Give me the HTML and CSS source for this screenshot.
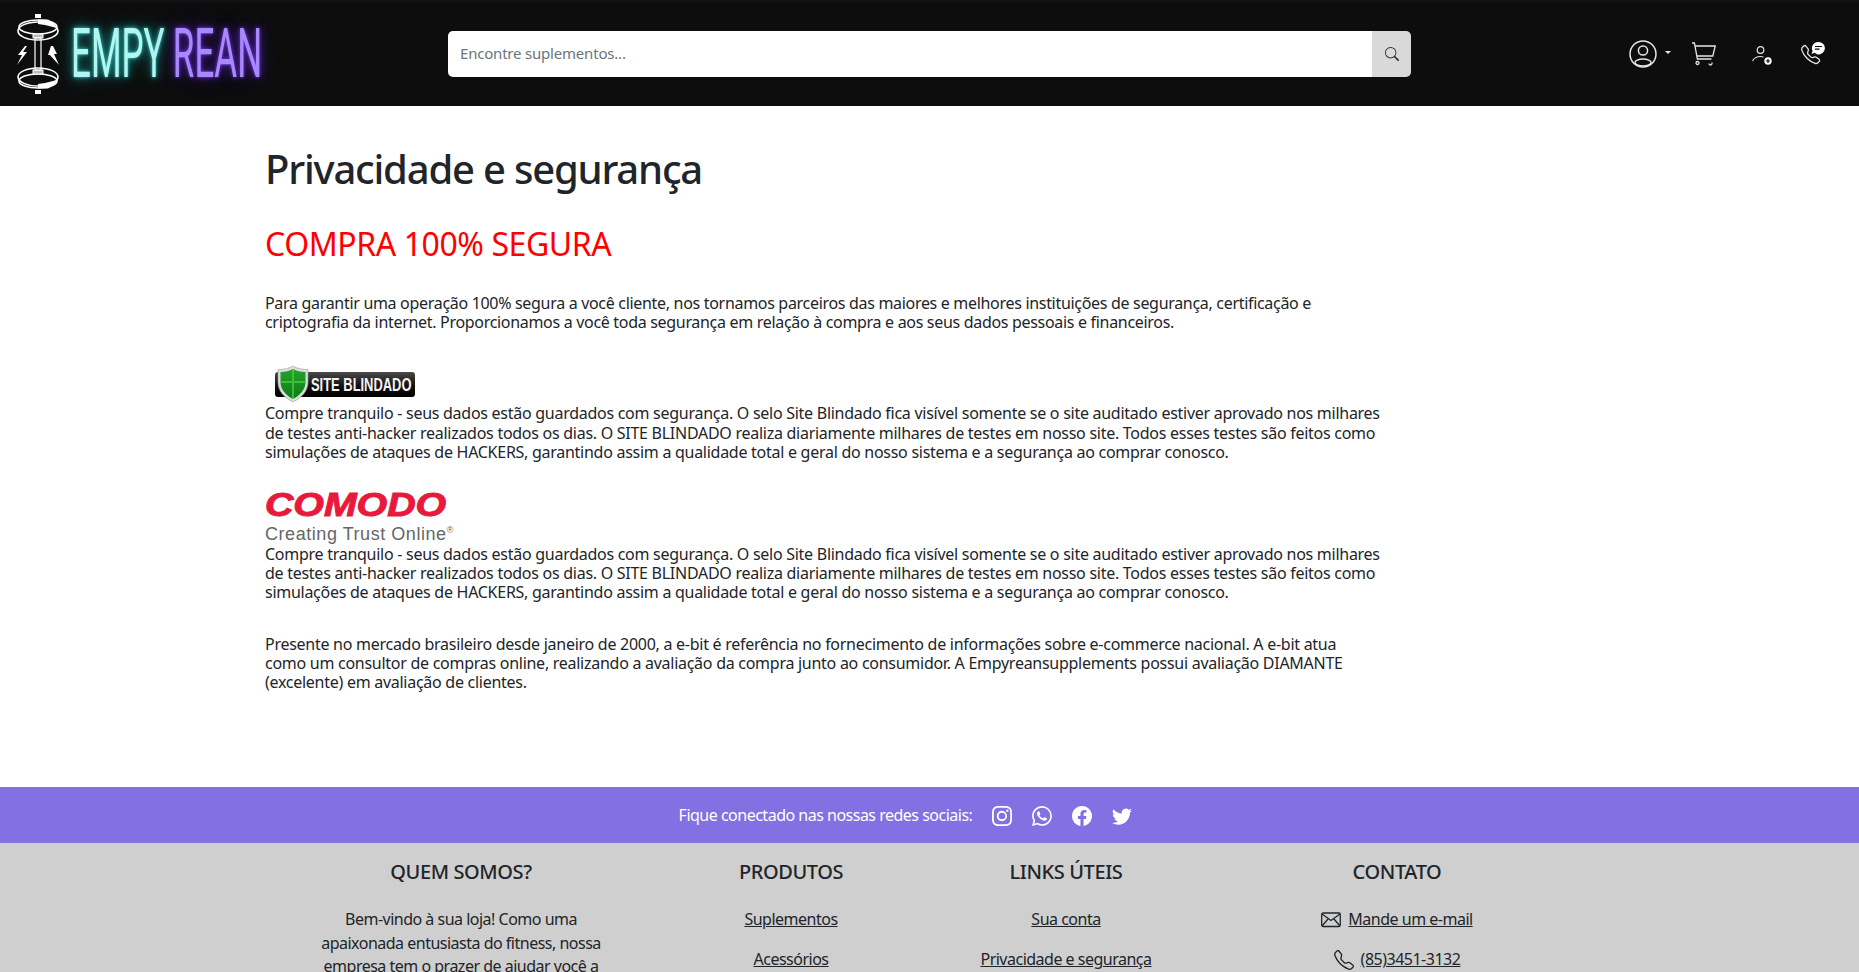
FILE: index.html
```html
<!DOCTYPE html>
<html lang="pt-BR">
<head>
    <meta charset="UTF-8">
    <meta name="viewport" content="width=device-width, initial-scale=1.0">
    <title>Privacidade e segurança</title>
    <link rel="stylesheet" href="styles.css">
</head>
<body>
<div class="page">

    <header class="topbar">
        <a class="logo" href="#">
            <svg class="logo-mark" viewBox="0 0 44 80" width="44" height="80" fill="none" stroke="#fff">
                <rect x="19" y="0" width="6" height="4" fill="#fff" stroke="none"/>
                <rect x="19" y="76" width="6" height="4" fill="#fff" stroke="none"/>
                <ellipse cx="22" cy="17" rx="20" ry="9" stroke-width="1.6"/>
                <ellipse cx="22" cy="13" rx="19" ry="7" stroke-width="1.6"/>
                <path d="M22 5.500h10l6 3.500 3 5-12-3-7-1z" fill="#fff" stroke="none"/>
                <ellipse cx="22" cy="63" rx="20" ry="9" stroke-width="1.6"/>
                <ellipse cx="22" cy="67" rx="19" ry="7" stroke-width="1.6"/>
                <path d="M22 74.500h10l6-3.500 3-5-12 3-7 1z" fill="#fff" stroke="none"/>
                <rect x="17" y="20" width="10" height="4" fill="#bbb" stroke="#fff"/>
                <rect x="17" y="56" width="10" height="4" fill="#bbb" stroke="#fff"/>
                <rect x="19" y="24" width="6" height="32" stroke-width="1.2"/>
                <path d="M9 32l-7 9h4l-5 10 10-13H7l4-6z" fill="#fff" stroke="none"/>
                <path d="M35 32l-3 9h5l-4-1 10 11-5-11h3l-4-8z" fill="#fff" stroke="none"/>
            </svg>
            <span class="logo-text"><span class="logo-empy">EMPY</span><span class="logo-rean">REAN</span></span>
        </a>

        <form class="search">
            <input type="text" class="search-input" placeholder="Encontre suplementos...">
            <button type="button" class="search-btn">
                <svg viewBox="0 0 16 16" width="14" height="14" fill="#333"><path d="M11.742 10.344a6.500 6.500 0 1 0-1.397 1.398h-.001c.03.04.062.078.098.115l3.850 3.850a1 1 0 0 0 1.415-1.414l-3.850-3.850a1.007 1.007 0 0 0-.115-.1zM12 6.500a5.500 5.500 0 1 1-11 0 5.500 5.500 0 0 1 11 0z"/></svg>
            </button>
        </form>

        <nav class="top-icons">
            <a href="#" class="account">
                <svg viewBox="0 0 28 30" width="28" height="30" fill="none" stroke="#e6e6e6" stroke-width="1.5">
                    <circle cx="14" cy="15" r="13"/>
                    <circle cx="14" cy="11.500" r="4.600"/>
                    <ellipse cx="14" cy="23.500" rx="8" ry="3.400"/>
                </svg>
                <span class="caret"></span>
            </a>
            <a href="#" class="cart">
                <svg viewBox="0 0 24 24" width="24" height="24" fill="none" stroke="#e6e6e6" stroke-width="1.3">
                    <path d="M0 1h2.400l3 16h14M3.200 4h20l-2.400 10H5"/>
                    <circle cx="5.500" cy="21" r="1.500"/>
                    <path d="M17 21.500a1.500 1.500 0 0 0 3 0v-1"/>
                </svg>
            </a>
            <a href="#" class="signup">
                <svg viewBox="0 0 20 19" width="20" height="19" fill="none" stroke="#e6e6e6" stroke-width="1.2">
                    <circle cx="8.500" cy="4" r="3.300"/>
                    <path d="M0.500 15c1.500-3 4-4.500 8-4.500 1.200 0 2 .2 3 .5"/>
                    <circle cx="16" cy="15" r="3.700" fill="#fff" stroke="none"/>
                    <path d="M16 13v4M14 15h4" stroke="#0d0d0d"/>
                </svg>
            </a>
            <a href="#" class="phone">
                <svg viewBox="0 0 24 23" width="24" height="23">
                    <g transform="translate(0 3) scale(1.200)" fill="#e6e6e6"><path d="M3.654 1.328a.678.678 0 0 0-1.015-.063L1.605 2.300c-.483.484-.661 1.169-.45 1.770a17.568 17.568 0 0 0 4.168 6.608 17.569 17.569 0 0 0 6.608 4.168c.601.211 1.286.033 1.770-.45l1.034-1.034a.678.678 0 0 0-.063-1.015l-2.307-1.794a.678.678 0 0 0-.58-.122l-2.190.547a1.745 1.745 0 0 1-1.657-.459L5.482 8.062a1.745 1.745 0 0 1-.46-1.657l.548-2.190a.678.678 0 0 0-.122-.58L3.654 1.328zM1.884.511a1.745 1.745 0 0 1 2.612.163L6.290 2.980c.329.423.445.974.315 1.494l-.547 2.190a.678.678 0 0 0 .178.643l2.457 2.457a.678.678 0 0 0 .644.178l2.189-.547a1.745 1.745 0 0 1 1.494.315l2.306 1.794c.829.645.905 1.870.163 2.611l-1.034 1.034c-.740.740-1.846 1.065-2.877.702a18.634 18.634 0 0 1-7.010-4.420 18.634 18.634 0 0 1-4.420-7.009c-.362-1.030-.037-2.137.703-2.877L1.885.511z"/></g>
                    <path d="M17.500 0a6.200 6.200 0 1 1-4 10.800L10.500 12l1.100-3A6.200 6.200 0 0 1 17.500 0z" fill="#fff"/>
                    <path d="M14 4.500h7M14 7.200h4.500" stroke="#0d0d0d" stroke-width="1.200"/>
                </svg>
            </a>
        </nav>
    </header>

    <main class="content">
        <h1 class="page-title">Privacidade e segurança</h1>
        <h2 class="secure-title">COMPRA 100% SEGURA</h2>

        <p class="intro">Para garantir uma operação 100% segura a você cliente, nos tornamos parceiros das maiores e melhores instituições de segurança, certificação e<br>criptografia da internet. Proporcionamos a você toda segurança em relação à compra e aos seus dados pessoais e financeiros.</p>

        <div class="badge-blindado">
            <svg class="shield" viewBox="0 0 32 36" width="32" height="36">
                <defs>
                    <linearGradient id="shieldGreen" x1="0" y1="0" x2="0" y2="1">
                        <stop offset="0" stop-color="#23a52a"/>
                        <stop offset="1" stop-color="#0c7a16"/>
                    </linearGradient>
                </defs>
                <path d="M16 0c4 2.500 9 3.500 15 3.500V16c0 9-6 15.500-15 20C7 31.500 1 25 1 16V3.500C7 3.500 12 2.500 16 0z" fill="#ddd" stroke="#999" stroke-width=".6"/>
                <path d="M16 3c3.500 2 7.500 3 12.500 3v10c0 7.500-5 13-12.500 17C8.500 29 3.500 23.500 3.500 16V6C8.500 6 12.500 5 16 3z" fill="url(#shieldGreen)"/>
                <path d="M16 3v30M3.500 16h25" stroke="#4bd23f" stroke-width="2" opacity=".7"/>
            </svg>
            <span class="badge-text">SITE BLINDADO</span>
        </div>
        <p class="seal-text">Compre tranquilo - seus dados estão guardados com segurança. O selo Site Blindado fica visível somente se o site auditado estiver aprovado nos milhares<br>de testes anti-hacker realizados todos os dias. O SITE BLINDADO realiza diariamente milhares de testes em nosso site. Todos esses testes são feitos como<br>simulações de ataques de HACKERS, garantindo assim a qualidade total e geral do nosso sistema e a segurança ao comprar conosco.</p>

        <div class="comodo">
            <div class="comodo-name">COMODO</div>
            <div class="comodo-tag">Creating Trust Online<sup>®</sup></div>
        </div>
        <p class="seal-text">Compre tranquilo - seus dados estão guardados com segurança. O selo Site Blindado fica visível somente se o site auditado estiver aprovado nos milhares<br>de testes anti-hacker realizados todos os dias. O SITE BLINDADO realiza diariamente milhares de testes em nosso site. Todos esses testes são feitos como<br>simulações de ataques de HACKERS, garantindo assim a qualidade total e geral do nosso sistema e a segurança ao comprar conosco.</p>

        <p class="ebit">Presente no mercado brasileiro desde janeiro de 2000, a e-bit é referência no fornecimento de informações sobre e-commerce nacional. A e-bit atua<br>como um consultor de compras online, realizando a avaliação da compra junto ao consumidor. A Empyreansupplements possui avaliação DIAMANTE<br>(excelente) em avaliação de clientes.</p>
    </main>

    <section class="social">
        <span class="social-label">Fique conectado nas nossas redes sociais:</span>
        <a href="#"><svg viewBox="0 0 16 16" width="20" height="20" fill="#fff"><path d="M8 0C5.829 0 5.556.01 4.703.048 3.850.088 3.269.222 2.760.420a3.917 3.917 0 0 0-1.417.923A3.927 3.927 0 0 0 .420 2.760C.222 3.268.087 3.850.048 4.700.01 5.555 0 5.827 0 8.001c0 2.172.01 2.444.048 3.297.04.852.174 1.433.372 1.942.205.526.478.972.923 1.417.444.445.890.719 1.416.923.510.198 1.090.333 1.942.372C5.555 15.990 5.827 16 8 16s2.444-.01 3.298-.048c.851-.04 1.434-.174 1.943-.372a3.916 3.916 0 0 0 1.416-.923c.445-.445.718-.891.923-1.417.197-.509.332-1.090.372-1.942C15.990 10.445 16 10.173 16 8s-.01-2.445-.048-3.299c-.04-.851-.175-1.433-.372-1.941a3.926 3.926 0 0 0-.923-1.417A3.911 3.911 0 0 0 13.240.420c-.510-.198-1.092-.333-1.943-.372C10.443.01 10.172 0 7.998 0h.003zm-.717 1.442h.718c2.136 0 2.389.007 3.232.046.780.035 1.204.166 1.486.275.373.145.640.319.920.599.280.280.453.546.598.920.110.281.240.705.275 1.485.039.843.047 1.096.047 3.231s-.008 2.389-.047 3.232c-.035.780-.166 1.203-.275 1.485a2.470 2.470 0 0 1-.599.919c-.280.280-.546.453-.920.598-.280.110-.704.240-1.485.276-.843.038-1.096.047-3.232.047s-2.390-.009-3.233-.047c-.780-.036-1.203-.166-1.485-.276a2.478 2.478 0 0 1-.920-.598 2.480 2.480 0 0 1-.600-.920c-.109-.281-.240-.705-.275-1.485-.038-.843-.046-1.096-.046-3.233 0-2.136.008-2.388.046-3.231.036-.780.166-1.204.276-1.486.145-.373.319-.640.599-.920.280-.280.546-.453.920-.598.282-.110.705-.240 1.485-.276.738-.034 1.024-.044 2.515-.045v.002zm4.988 1.328a.960.960 0 1 0 0 1.920.960.960 0 0 0 0-1.920zm-4.270 1.122a4.109 4.109 0 1 0 0 8.217 4.109 4.109 0 0 0 0-8.217zm0 1.441a2.667 2.667 0 1 1 0 5.334 2.667 2.667 0 0 1 0-5.334z"/></svg></a>
        <a href="#"><svg viewBox="0 0 16 16" width="20" height="20" fill="#fff"><path d="M13.601 2.326A7.854 7.854 0 0 0 7.994 0C3.627 0 .068 3.558.064 7.926c0 1.399.366 2.760 1.057 3.965L0 16l4.204-1.102a7.933 7.933 0 0 0 3.790.965h.004c4.368 0 7.926-3.558 7.930-7.930A7.898 7.898 0 0 0 13.600 2.326zM7.994 14.521a6.573 6.573 0 0 1-3.356-.920l-.240-.144-2.494.654.666-2.433-.156-.251a6.560 6.560 0 0 1-1.007-3.505c0-3.626 2.957-6.584 6.591-6.584a6.560 6.560 0 0 1 4.660 1.931 6.557 6.557 0 0 1 1.928 4.660c-.004 3.639-2.961 6.592-6.592 6.592zm3.615-4.934c-.197-.099-1.170-.578-1.353-.646-.182-.065-.315-.099-.445.099-.133.197-.513.646-.627.775-.114.133-.232.148-.430.050-.197-.100-.836-.308-1.592-.985-.590-.525-.985-1.175-1.103-1.372-.114-.198-.011-.304.088-.403.087-.088.197-.232.296-.346.100-.114.133-.198.198-.330.065-.134.034-.248-.015-.347-.050-.099-.445-1.076-.612-1.470-.160-.389-.323-.335-.445-.340-.114-.007-.247-.007-.380-.007a.729.729 0 0 0-.529.247c-.182.198-.691.677-.691 1.654 0 .977.710 1.916.810 2.049.098.133 1.394 2.132 3.383 2.992.470.205.840.326 1.129.418.475.152.904.129 1.246.080.380-.058 1.171-.480 1.338-.943.164-.464.164-.860.114-.943-.049-.084-.182-.133-.380-.232z"/></svg></a>
        <a href="#"><svg viewBox="0 0 16 16" width="20" height="20" fill="#fff"><path d="M16 8.049c0-4.446-3.582-8.050-8-8.050C3.580 0-.002 3.603-.002 8.050c0 4.017 2.926 7.347 6.750 7.951v-5.625h-2.030V8.050H6.750V6.275c0-2.017 1.195-3.131 3.022-3.131.876 0 1.791.157 1.791.157v1.980h-1.009c-.993 0-1.303.621-1.303 1.258v1.510h2.218l-.354 2.326H9.250V16c3.824-.604 6.750-3.934 6.750-7.951z"/></svg></a>
        <a href="#"><svg viewBox="0 0 16 16" width="20" height="20" fill="#fff"><path d="M5.026 15c6.038 0 9.341-5.003 9.341-9.334 0-.140 0-.282-.006-.422A6.685 6.685 0 0 0 16 3.542a6.658 6.658 0 0 1-1.889.518 3.301 3.301 0 0 0 1.447-1.817 6.533 6.533 0 0 1-2.087.793A3.286 3.286 0 0 0 7.875 6.030a9.325 9.325 0 0 1-6.767-3.429 3.289 3.289 0 0 0 1.018 4.382A3.323 3.323 0 0 1 .640 6.575v.045a3.288 3.288 0 0 0 2.632 3.218 3.203 3.203 0 0 1-.865.115 3.230 3.230 0 0 1-.614-.057 3.283 3.283 0 0 0 3.067 2.277A6.588 6.588 0 0 1 .780 13.580a6.320 6.320 0 0 1-.780-.045A9.344 9.344 0 0 0 5.026 15z"/></svg></a>
    </section>

    <footer class="footer">
        <div class="footer-col">
            <h5>QUEM SOMOS?</h5>
            <p class="about">Bem-vindo à sua loja! Como uma apaixonada entusiasta do fitness, nossa empresa tem o prazer de ajudar você a</p>
        </div>
        <div class="footer-col">
            <h5>PRODUTOS</h5>
            <p><a href="#">Suplementos</a></p>
            <p><a href="#">Acessórios</a></p>
        </div>
        <div class="footer-col">
            <h5>LINKS ÚTEIS</h5>
            <p><a href="#">Sua conta</a></p>
            <p><a href="#">Privacidade e segurança</a></p>
        </div>
        <div class="footer-col">
            <h5>CONTATO</h5>
            <p class="contact">
                <svg viewBox="0 0 20 16" width="20" height="16" fill="none" stroke="#212529" stroke-width="1.3"><rect x=".7" y="1" width="18.600" height="13.500" rx="1.500"/><path d="M1 2l9 6.500L19 2M1 14l6.500-7.500M19 14l-6.500-7.500"/></svg>
                <a href="#">Mande um e-mail</a>
            </p>
            <p class="contact">
                <svg viewBox="0 0 16 16" width="20" height="20" fill="#212529"><path d="M3.654 1.328a.678.678 0 0 0-1.015-.063L1.605 2.300c-.483.484-.661 1.169-.450 1.770a17.568 17.568 0 0 0 4.168 6.608 17.569 17.569 0 0 0 6.608 4.168c.601.211 1.286.033 1.770-.450l1.034-1.034a.678.678 0 0 0-.063-1.015l-2.307-1.794a.678.678 0 0 0-.580-.122l-2.190.547a1.745 1.745 0 0 1-1.657-.459L5.482 8.062a1.745 1.745 0 0 1-.460-1.657l.548-2.190a.678.678 0 0 0-.122-.580L3.654 1.328zM1.884.511a1.745 1.745 0 0 1 2.612.163L6.290 2.980c.329.423.445.974.315 1.494l-.547 2.190a.678.678 0 0 0 .178.643l2.457 2.457a.678.678 0 0 0 .644.178l2.189-.547a1.745 1.745 0 0 1 1.494.315l2.306 1.794c.829.645.905 1.870.163 2.611l-1.034 1.034c-.740.740-1.846 1.065-2.877.702a18.634 18.634 0 0 1-7.010-4.420 18.634 18.634 0 0 1-4.420-7.009c-.362-1.030-.037-2.137.703-2.877L1.885.511z"/></svg>
                <a href="#">(85)3451-3132</a>
            </p>
        </div>
    </footer>

</div>
</body>
</html>
```

FILE: styles.css
```css
* {
    box-sizing: border-box;
}
html, body {
    margin: 0;
    padding: 0;
}
body {
    font-family: "Noto Sans", "Open Sans", sans-serif;
    font-size: 16px;
    line-height: 19.2px;
    letter-spacing: -0.27px;
    color: #212529;
    background: #fff;
}
a {
    color: inherit;
}
.page {
    height: 972px;
    overflow: hidden;
}

/* top bar */
.topbar {
    display: flex;
    align-items: center;
    height: 106px;
    padding-top: 2px;
    background: linear-gradient(#12121a, #0d0d0d 4px);
}
.logo {
    display: flex;
    align-items: center;
    gap: 11px;
    width: 448px;
    padding-left: 16px;
    text-decoration: none;
}
.logo-mark {
    flex: none;
}
.logo-text {
    display: block;
    width: 380px;
    height: 76px;
    line-height: 76px;
    font-family: "Roboto", sans-serif;
    font-weight: 400;
    font-size: 68px;
    letter-spacing: 0;
    white-space: nowrap;
    transform: scaleX(0.515);
    transform-origin: left center;
}
.logo-empy {
    color: #b4f5f2;
    text-shadow: 0 0 5px #2fd6cf, 0 0 14px #1d8f8c, 0 0 26px #14605e;
    margin-right: 16px;
}
.logo-rean {
    color: #a988fb;
    text-shadow: 0 0 5px #7a3ff0, 0 0 14px #4a1f9e, 0 0 26px #2c1268;
}
.search {
    display: flex;
    flex: none;
    width: 963px;
    height: 46px;
}
.search-input {
    flex: 1;
    border: 0;
    border-radius: 5px 0 0 5px;
    padding: 0 12px;
    font: inherit;
    font-size: 15px;
    letter-spacing: -0.2px;
    outline: none;
}
.search-input::placeholder {
    color: #6c757d;
}
.search-btn {
    width: 39px;
    border: 0;
    padding: 0;
    border-radius: 0 5px 5px 0;
    background: #d9d9d9;
    display: flex;
    align-items: center;
    justify-content: center;
}
.top-icons {
    display: flex;
    align-items: center;
    margin-left: 218px;
}
.top-icons a {
    display: flex;
}
.account {
    align-items: center;
    gap: 8px;
}
.caret {
    width: 0;
    height: 0;
    border-left: 3.5px solid transparent;
    border-right: 3.5px solid transparent;
    border-top: 3.5px solid #e6e6e6;
    margin-bottom: 4px;
}
.cart {
    margin-left: 21px;
}
.signup {
    margin-left: 36px;
    margin-top: 2px;
}
.phone {
    margin-left: 29px;
    margin-top: -1px;
}

/* main text */
.content {
    padding: 0 0 0 265px;
    height: 681px;
    white-space: nowrap;
}
.content p {
    margin: 0;
}
.page-title {
    margin: 0;
    padding-top: 39px;
    font-size: 40px;
    line-height: 48px;
    font-weight: 500;
    letter-spacing: -1.2px;
}
.secure-title {
    margin: 32px 0 0;
    font-size: 32px;
    line-height: 38px;
    font-weight: 400;
    letter-spacing: -0.42px;
    color: #f00;
}
.intro {
    padding-top: 31px;
    letter-spacing: -0.31px;
}
.badge-blindado {
    position: relative;
    display: flex;
    align-items: center;
    width: 140px;
    height: 25px;
    margin: 40px 0 7px 10px;
    padding-left: 36px;
    border-radius: 3px;
    background: linear-gradient(#4a4a4a, #111 55%, #000);
}
.shield {
    position: absolute;
    left: 2px;
    top: -6px;
}
.badge-text {
    font-family: "Liberation Sans", sans-serif;
    font-weight: 700;
    font-size: 19px;
    letter-spacing: 0;
    color: #f4f4f4;
    white-space: nowrap;
    display: block;
    transform: scaleX(0.68);
    transform-origin: left center;
}
.comodo {
    padding-top: 28px;
}
.comodo-name {
    font-family: "Liberation Sans", sans-serif;
    font-weight: 700;
    font-style: italic;
    font-size: 33px;
    line-height: 30px;
    letter-spacing: 0;
    color: #e8193c;
    white-space: nowrap;
    -webkit-text-stroke: 1px #e8193c;
    transform: scaleX(1.19);
    transform-origin: left center;
}
.comodo-tag {
    margin-top: 3px;
    font-family: "Liberation Sans", sans-serif;
    font-size: 18px;
    line-height: 22px;
    letter-spacing: 0.55px;
    color: #666;
}
.comodo-tag sup {
    font-size: 9px;
    line-height: 0;
}
.ebit {
    padding-top: 32px;
}

/* social strip */
.social {
    display: flex;
    align-items: center;
    justify-content: center;
    gap: 20px;
    height: 56px;
    padding: 2px 48px 0 0;
    background: #8370e2;
    color: #fff;
}
.social-label {
    letter-spacing: -0.5px;
    margin-top: -1px;
}
.social a {
    display: flex;
}

/* footer */
.footer {
    display: grid;
    grid-template-columns: 392px 268px 282px 380px;
    padding-left: 265px;
    height: 129px;
    background: #cfcfcf;
    text-align: center;
    letter-spacing: -0.5px;
}
.footer-col h5 {
    margin: 0;
    padding-top: 17px;
    font-size: 20px;
    line-height: 24px;
    font-weight: 500;
    letter-spacing: -0.4px;
}
.footer-col p {
    margin: 27px 0 0;
    line-height: 17px;
}
.footer-col p + p {
    margin-top: 23px;
}
.footer-col .about {
    width: 290px;
    margin: 24px auto 0;
    line-height: 23.6px;
}
.footer-col .contact {
    display: flex;
    align-items: center;
    justify-content: center;
    gap: 7px;
    height: 17px;
}
```
